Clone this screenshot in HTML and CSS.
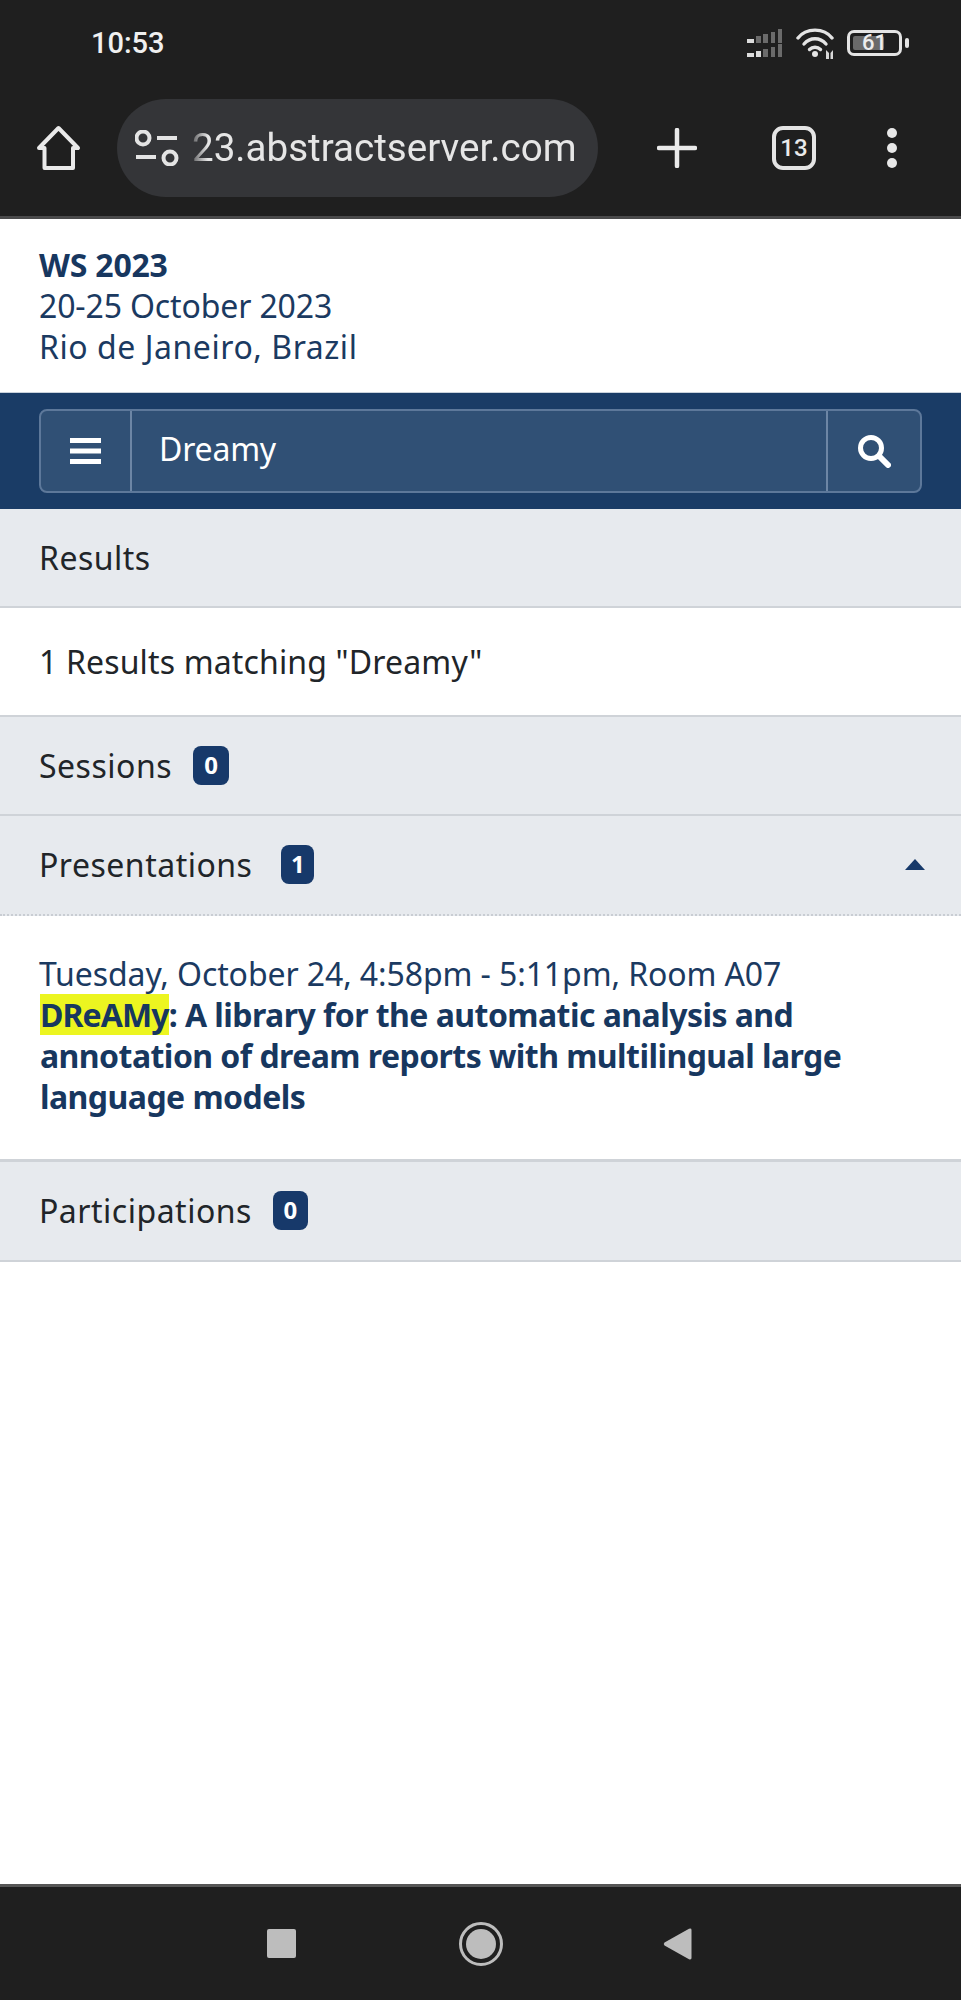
FILE: index.html
```html
<!DOCTYPE html>
<html lang="en">
<head>
<meta charset="utf-8">
<title>WS 2023 - Results</title>
<link rel="stylesheet" href="styles.css">
</head>
<body>
<header class="chrome">
  <div class="status">
    <span class="time">10:53</span>
    <div class="status-icons">
      <svg class="sig" width="36" height="29" viewBox="0 0 36 29">
        <g fill="#6b6b6b">
          <rect x="9" y="7" width="5" height="7"/><rect x="16" y="5" width="5" height="9"/><rect x="24" y="3" width="4" height="11"/><rect x="31" y="0" width="4" height="14"/>
          <rect x="9" y="22" width="5" height="6" fill="#dcdcdc"/><rect x="16" y="20" width="5" height="8"/><rect x="24" y="18" width="4" height="10"/><rect x="31" y="15" width="4" height="13"/>
        </g>
        <rect x="0" y="10" width="7" height="4" fill="#dcdcdc"/>
        <rect x="0" y="24" width="7" height="4" fill="#dcdcdc"/>
      </svg>
      <svg class="wifi" width="40" height="31" viewBox="0 0 40 31">
        <g fill="none" stroke="#e4e4e4" stroke-width="3.400" stroke-linecap="round">
          <path d="M2 10C10 -.5 28 -.5 36 10"/>
          <path d="M8 16C14 9 24 9 30 16"/>
          <path d="M13.500 21.500C16.500 18.500 21.500 18.500 24.500 21.500"/>
        </g>
        <circle cx="19" cy="26" r="3" fill="#e4e4e4"/>
        <g fill="#d8d8d8"><path d="M30 22L33 25V31H30Z"/><path d="M37 22L34.500 25V31H37Z"/></g>
      </svg>
      <div class="battery"><span class="battery-fill"></span><span class="battery-num">61</span></div>
      <span class="battery-nub"></span>
    </div>
  </div>
  <div class="toolbar">
    <svg class="home" width="44" height="46" viewBox="0 0 44 46">
      <path d="M2 23L21.500 3L41 23H36V43H7.500V23Z" fill="none" stroke="#eaeaea" stroke-width="4" stroke-linejoin="round"/>
    </svg>
    <div class="pill">
      <svg class="tune" width="44" height="36" viewBox="0 0 44 36">
        <g fill="none" stroke="#e4e4e4" stroke-width="4">
          <circle cx="8" cy="8" r="6.500"/>
          <circle cx="35" cy="28" r="6.500"/>
          <path d="M22 8H42M1 27H21"/>
        </g>
      </svg>
      <span class="url">23.abstractserver.com</span>
    </div>
    <svg class="plus" width="40" height="40" viewBox="0 0 40 40">
      <path d="M20 2V38M2 20H38" stroke="#eaeaea" stroke-width="4.500" stroke-linecap="round"/>
    </svg>
    <div class="tabs">13</div>
    <div class="dots"><i></i><i></i><i></i></div>
  </div>
</header>

<main class="page">
  <section class="conf">
    <div class="conf-name">WS 2023</div>
    <div class="conf-date">20-25 October 2023</div>
    <div class="conf-place">Rio de Janeiro, Brazil</div>
  </section>
  <nav class="band">
    <div class="search">
      <div class="search-menu">
        <svg width="31" height="26" viewBox="0 0 31 26"><path d="M0 0H31V5H0ZM0 10.500H31V15.500H0ZM0 21H31V26H0Z" fill="#fff"/></svg>
      </div>
      <div class="search-text">Dreamy</div>
      <div class="search-go">
        <svg width="34" height="34" viewBox="0 0 34 34"><circle cx="14" cy="14" r="10.500" fill="none" stroke="#fff" stroke-width="5"/><path d="M22 22L31 31" stroke="#fff" stroke-width="6" stroke-linecap="round"/></svg>
      </div>
    </div>
  </nav>

  <div class="bar bar-results"><span class="bar-label">Results</span></div>
  <div class="message">1 Results matching "Dreamy"</div>
  <div class="bar bar-sessions"><span class="bar-label">Sessions</span><span class="badge badge-sessions">0</span></div>
  <div class="bar bar-open"><span class="bar-label">Presentations</span><span class="badge badge-pres">1</span><span class="caret"></span></div>
  <article class="result">
    <div class="result-date">Tuesday, October 24, 4:58pm - 5:11pm, Room A07</div>
    <div class="result-title"><mark>DReAMy</mark>: A library for the automatic analysis and annotation of dream reports with multilingual large language models</div>
  </article>
  <div class="bar bar-part"><span class="bar-label">Participations</span><span class="badge badge-part">0</span></div>
</main>

<footer class="sysnav">
  <span class="nav-square"></span>
  <span class="nav-circle"><i></i></span>
  <svg class="nav-back" width="29" height="32" viewBox="0 0 29 32"><path d="M1.500 14.500L26 .8Q28.500 0 28.500 2V30Q28.500 32 26 31.200L1.500 17.500Q0 16 1.500 14.500Z" fill="#bdbdbd"/></svg>
</footer>
</body>
</html>
```
FILE: styles.css
```css
* { box-sizing: border-box; }
html, body { margin: 0; padding: 0; }
body {
  width: 961px;
  height: 2000px;
  display: flex;
  flex-direction: column;
  background: #fff;
  font-family: "Noto Sans", "Open Sans", sans-serif;
  font-size: 32px;
  line-height: 41px;
  color: #1b3a61;
  overflow: hidden;
}

/* phone + browser chrome */
.chrome {
  height: 219px;
  flex: none;
  background: #1f1f1f;
  border-bottom: 3px solid #4a4a4b;
  font-family: Roboto, sans-serif;
  color: #eaeaea;
}
.status {
  height: 86px;
  display: flex;
  align-items: center;
  justify-content: space-between;
  padding: 0 52px 0 91px;
}
.time { font-size: 29px; font-weight: 500; color: #f0f0f0; line-height: 34px; }
.status-icons { display: flex; align-items: center; }
.sig { margin-right: 13px; }
.wifi { margin-right: 11px; }
.battery {
  position: relative;
  width: 55px;
  height: 26px;
  border: 3px solid #e4e4e4;
  border-radius: 7px;
  padding: 3px;
  display: flex;
}
.battery-fill { width: 31px; background: #6a6a6a; border-radius: 2px; }
.battery-num {
  position: absolute;
  left: 12px;
  top: -1px;
  font-size: 22px;
  line-height: 22px;
  font-weight: 500;
  color: #ededed;
}
.battery-nub { width: 4px; height: 10px; margin-left: 3px; background: #e4e4e4; border-radius: 2px; }

.toolbar {
  height: 124px;
  display: flex;
  align-items: center;
  padding-left: 37px;
}
.pill {
  width: 481px;
  height: 98px;
  margin-left: 36px;
  background: #343538;
  border-radius: 49px;
  display: flex;
  align-items: center;
  padding-left: 18px;
  overflow: hidden;
}
.tune { flex: none; }
.url {
  margin-left: 13px;
  font-size: 38.600px;
  line-height: 44px;
  color: #e6e6e6;
  white-space: nowrap;
  -webkit-mask-image: linear-gradient(90deg, rgba(0,0,0,.25), #000 16px);
  mask-image: linear-gradient(90deg, rgba(0,0,0,.25), #000 16px);
}
.plus { margin-left: 59px; }
.tabs {
  width: 44px;
  height: 44px;
  margin-left: 75px;
  border: 4px solid #e4e4e4;
  border-radius: 11px;
  display: flex;
  align-items: center;
  justify-content: center;
  font-size: 24px;
  font-weight: 500;
  line-height: 1;
  color: #eaeaea;
}
.dots { margin-left: 71px; display: flex; flex-direction: column; gap: 5px; }
.dots i { display: block; width: 10px; height: 10px; border-radius: 50%; background: #e8e8e8; }

/* page */
.page { flex: 1; min-height: 0; }
.conf { height: 173px; padding: 25px 39px; }
.conf-name { font-weight: 700; color: #17375f; letter-spacing: -.2px; }
.conf-date { letter-spacing: -.14px; }
.conf-place { letter-spacing: .55px; }
.band { height: 117px; padding: 16px 39px 17px 39px; background: #1a3c66; border-top: 1px solid #c9d2dc; }
.search {
  height: 84px;
  display: flex;
  background: #305075;
  border: 2px solid #5d789a;
  border-radius: 8px;
  color: #fff;
}
.search-menu {
  width: 91px;
  flex: none;
  display: flex;
  align-items: center;
  justify-content: center;
  border-right: 2px solid #6d86a5;
}
.search-text { flex: 1; padding: 0 0 0 27px; line-height: 76px; letter-spacing: -.2px; }
.search-go {
  width: 94px;
  flex: none;
  display: flex;
  align-items: center;
  justify-content: center;
  border-left: 2px solid #6d86a5;
}

.bar {
  display: flex;
  align-items: center;
  padding: 0 36px 0 39px;
  background: #e7eaee;
  color: #212529;
  border-bottom: 2px solid #cfd3d8;
}
.bar-label { letter-spacing: .5px; }
.bar-results { height: 99px; }
.message { height: 109px; padding: 33px 39px 0; color: #212529; border-bottom: 2px solid #cfd3d8; letter-spacing: .15px; }
.bar-sessions { height: 99px; padding-bottom: 1px; }
.bar-open { height: 100px; padding-bottom: 2px; border-bottom: 2px dotted #c9cdd3; }
.bar-part { height: 100px; padding-bottom: 2px; }

.badge {
  display: flex;
  align-items: center;
  justify-content: center;
  height: 39px;
  background: #17396a;
  color: #fff;
  border-radius: 8px;
  font-size: 24px;
  font-weight: 700;
  line-height: 1;
}
.badge-sessions { width: 36px; margin-left: 21px; }
.badge-pres { width: 33px; margin-left: 29px; }
.badge-part { width: 35px; margin-left: 21px; }
.caret {
  margin-left: auto;
  width: 0;
  height: 0;
  border-left: 10px solid transparent;
  border-right: 10px solid transparent;
  border-bottom: 11px solid #17396a;
}
.result {
  height: 246px;
  padding: 37px 40px 0;
  border-bottom: 3px solid #cfd3d8;
}
.result-date { letter-spacing: -.1px; margin-left: -1px; }
.result-title { font-weight: 700; color: #17375f; letter-spacing: -.55px; }
mark { background: #ecf520; color: #17375f; display: inline-block; letter-spacing: -.9px; }

/* android nav */
.sysnav {
  height: 116px;
  flex: none;
  background: #1f1f1f;
  border-top: 3px solid #565656;
  display: flex;
  align-items: center;
  padding: 0 0 0 267px;
}
.nav-square { width: 29px; height: 29px; background: #bdbdbd; border-radius: 2px; }
.nav-circle {
  width: 44px;
  height: 44px;
  margin-left: 163px;
  border: 3px solid #bdbdbd;
  border-radius: 50%;
  display: flex;
  align-items: center;
  justify-content: center;
}
.nav-circle i { display: block; width: 30px; height: 30px; border-radius: 50%; background: #bdbdbd; }
.nav-back { margin-left: 160px; }
```
